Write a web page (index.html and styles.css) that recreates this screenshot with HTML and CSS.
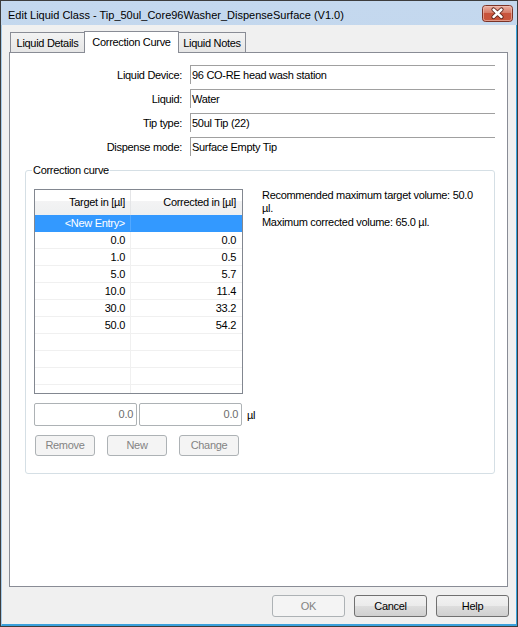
FILE: index.html
```html
<!DOCTYPE html>
<html>
<head>
<meta charset="utf-8">
<title>Edit Liquid Class</title>
<link rel="stylesheet" href="styles.css">
</head>
<body>
<div class="window">
  <div class="titlebar">
    <span class="title">Edit Liquid Class - Tip_50ul_Core96Washer_DispenseSurface (V1.0)</span>
    <span class="close">
      <svg width="31" height="17" viewBox="0 0 31 17">
        <defs>
          <linearGradient id="cg" x1="0" y1="0" x2="0" y2="1">
            <stop offset="0" stop-color="#edb3a6"/>
            <stop offset="0.45" stop-color="#d67c68"/>
            <stop offset="0.5" stop-color="#c8533c"/>
            <stop offset="1" stop-color="#c9563c"/>
          </linearGradient>
        </defs>
        <rect x="0.5" y="0.5" width="30" height="16" rx="3" ry="3" fill="url(#cg)" stroke="#7b3327"/>
        <rect x="1.5" y="1.5" width="28" height="14" rx="2" ry="2" fill="none" stroke="#f2c6bb" stroke-opacity="0.6"/>
        <path d="M11.5 4.5 L19.5 12 M19.5 4.5 L11.5 12" stroke="#5a2118" stroke-width="4.2" stroke-linecap="round"/>
        <path d="M11.5 4.5 L19.5 12 M19.5 4.5 L11.5 12" stroke="#ffffff" stroke-width="2.4" stroke-linecap="round"/>
      </svg>
    </span>
  </div>
  <div class="client">
    <div class="tabs">
      <div class="tab tab-details">Liquid Details</div>
      <div class="tab tab-active">Correction Curve</div>
      <div class="tab tab-notes">Liquid Notes</div>
    </div>
    <div class="panel">
      <div class="fields">
        <div class="label">Liquid Device:</div><div class="box">96 CO-RE head wash station</div>
        <div class="label">Liquid:</div><div class="box">Water</div>
        <div class="label">Tip type:</div><div class="box">50ul Tip (22)</div>
        <div class="label">Dispense mode:</div><div class="box">Surface Empty Tip</div>
      </div>
      <fieldset class="group">
        <legend>Correction curve</legend>
        <div class="group-body">
          <div class="left">
            <div class="grid">
              <div class="row head"><div class="c1">Target in [µl]</div><div class="c2">Corrected in [µl]</div></div>
              <div class="row sel"><div class="c1">&lt;New Entry&gt;</div><div class="c2"></div></div>
              <div class="row"><div class="c1">0.0</div><div class="c2">0.0</div></div>
              <div class="row"><div class="c1">1.0</div><div class="c2">0.5</div></div>
              <div class="row"><div class="c1">5.0</div><div class="c2">5.7</div></div>
              <div class="row"><div class="c1">10.0</div><div class="c2">11.4</div></div>
              <div class="row"><div class="c1">30.0</div><div class="c2">33.2</div></div>
              <div class="row"><div class="c1">50.0</div><div class="c2">54.2</div></div>
              <div class="row"><div class="c1"></div><div class="c2"></div></div>
              <div class="row"><div class="c1"></div><div class="c2"></div></div>
              <div class="row"><div class="c1"></div><div class="c2"></div></div>
              <div class="row"><div class="c1"></div><div class="c2"></div></div>
            </div>
            <div class="inputs">
              <div class="num">0.0</div>
              <div class="num">0.0</div>
              <span class="unit">µl</span>
            </div>
            <div class="btns">
              <div class="btn disabled">Remove</div>
              <div class="btn disabled">New</div>
              <div class="btn disabled">Change</div>
            </div>
          </div>
          <div class="info">Recommended maximum target volume: 50.0<br>µl.<br>Maximum corrected volume: 65.0 µl.</div>
        </div>
      </fieldset>
    </div>
    <div class="footer">
      <div class="btn big disabled">OK</div>
      <div class="btn big">Cancel</div>
      <div class="btn big">Help</div>
    </div>
  </div>
</div>
</body>
</html>
```
FILE: styles.css
```css
html, body {
  margin: 0;
  padding: 0;
  background: #ffffff;
}
body {
  font-family: "Liberation Sans", Arial, sans-serif;
  font-size: 11px;
  letter-spacing: -0.3px;
  color: #000;
}
.window {
  width: 518px;
  height: 627px;
  box-sizing: border-box;
  border: 1px solid #3d3d3d;
  display: flex;
  flex-direction: column;
  background: linear-gradient(#c4d8ee, #b6cde8);
}
.titlebar {
  height: 24px;
  flex: 0 0 24px;
  display: flex;
  justify-content: space-between;
  align-items: flex-start;
  box-sizing: border-box;
}
.title {
  padding: 7px 0 0 7px;
  line-height: 15px;
  font-size: 11px;
  letter-spacing: 0;
  color: #000;
}
.close {
  margin: 4px 4px 0 0;
  width: 31px;
  height: 17px;
  display: block;
}
.close svg { display: block; }
.client {
  flex: 1;
  background: #f0f0f0;
  border-left: 1px solid #a6cbe9;
  border-right: 1px solid #3aa1dc;
  border-bottom: 2px solid #3aa1dc;
  padding: 6px 7px 7px 7px;
  display: flex;
  flex-direction: column;
}
.tabs {
  height: 21px;
  display: flex;
  align-items: flex-end;
}
.tab {
  box-sizing: border-box;
  height: 20px;
  border: 1px solid #898c95;
  border-bottom: none;
  background: linear-gradient(#f3f3f3, #e6e6e6);
  text-align: center;
  padding-top: 4px;
  line-height: 13px;
  white-space: nowrap;
}
.tab-details {
  width: 75px;
  margin-left: 1px;
}
.tab-active {
  width: 95px;
  height: 22px;
  margin-left: -1px;
  margin-bottom: -1px;
  background: #ffffff;
  position: relative;
  z-index: 1;
}
.tab-notes {
  width: 68px;
  margin-left: -1px;
}
.panel {
  height: 535px;
  box-sizing: border-box;
  border: 1px solid #898c95;
  background: #ffffff;
  margin-right: 1px;
  padding-top: 12px;
}
.fields {
  display: grid;
  grid-template-columns: 172px 305px;
  column-gap: 8px;
  row-gap: 5px;
  grid-auto-rows: 19px;
}
.label {
  text-align: right;
  line-height: 18px;
  padding-top: 1px;
}
.box {
  box-sizing: border-box;
  border-top: 1px solid #a0a0a0;
  border-left: 1px solid #a0a0a0;
  line-height: 18px;
  padding-left: 1px;
  white-space: nowrap;
}
.group {
  margin: 8px 12px 0 15px;
  padding: 12px 0 17px 8px;
  border: 1px solid #d5dfe5;
  border-radius: 3px;
  min-width: 0;
}
.group legend {
  padding: 0 1px;
  margin-left: -2px;
  line-height: 13px;
}
.group-body {
  display: flex;
  align-items: flex-start;
}
.left {
  flex: 0 0 209px;
  width: 209px;
}
.grid {
  box-sizing: border-box;
  width: 209px;
  height: 205px;
  border: 1px solid #828790;
  overflow: hidden;
}
.row {
  display: flex;
  height: 17px;
  box-sizing: border-box;
  border-bottom: 1px solid #f0f0f0;
  line-height: 16px;
}
.row .c1 {
  width: 96px;
  box-sizing: border-box;
  border-right: 1px solid #f0f0f0;
  text-align: right;
  padding-right: 5px;
}
.row .c2 {
  width: 111px;
  box-sizing: border-box;
  text-align: right;
  padding-right: 6px;
}
.row.head {
  height: 25px;
  border-bottom: none;
  background: linear-gradient(#ffffff 0%, #ffffff 42%, #f3f3f4 43%, #eef0f1 100%);
  line-height: 25px;
}
.row.head .c1 {
  border-right-color: #e4e5e7;
}
.row.sel {
  background: #3399ff;
  color: #ffffff;
  border-bottom-color: #3399ff;
}
.row.sel .c1 {
  border-right-color: #52a8ff;
}
.inputs {
  margin-top: 9px;
  display: flex;
  align-items: center;
  gap: 2px;
  width: 230px;
}
.num {
  box-sizing: border-box;
  width: 103px;
  height: 23px;
  border: 1px solid #adb2b5;
  border-radius: 2px;
  background: #ffffff;
  color: #6d6d6d;
  text-align: right;
  padding-right: 3px;
  line-height: 21px;
}
.unit {
  margin-left: 3px;
}
.btns {
  margin-top: 9px;
  margin-left: 1px;
  display: flex;
  gap: 12px;
}
.btn {
  box-sizing: border-box;
  width: 60px;
  height: 21px;
  border: 1px solid #707070;
  border-radius: 3px;
  background: linear-gradient(#f2f2f2 0%, #ebebeb 48%, #dddddd 52%, #cfcfcf 100%);
  text-align: center;
  line-height: 19px;
}
.btn.disabled {
  border-color: #adb2b5;
  background: #f4f4f4;
  color: #838383;
}
.info {
  margin-left: 19px;
  line-height: 13.3px;
  white-space: nowrap;
}
.footer {
  margin-top: 8px;
  display: flex;
  justify-content: flex-end;
  gap: 9px;
}
.btn.big {
  width: 73px;
  height: 22px;
  line-height: 20px;
}
```
